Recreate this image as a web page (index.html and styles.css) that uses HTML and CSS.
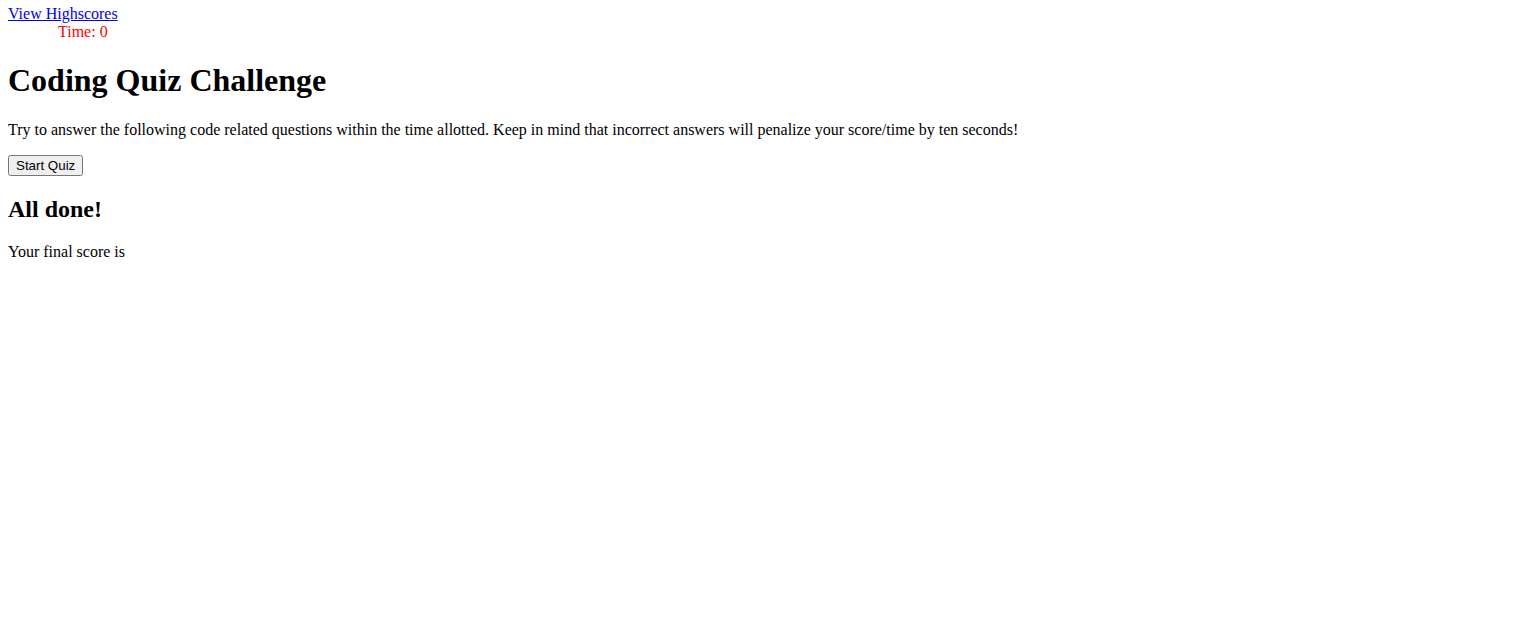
FILE: index.html
```html
<!DOCTYPE html>
<html>
<head>
<meta charset="utf-8">
<title>Coding Quiz</title>
<link rel="stylesheet" href="styles.css">
</head>
<body>
<header class="top">
<a href="#" class="scores-link">View Highscores</a>
<div class="timer">Time: <span class="time-left">0</span></div>
</header>
<main>
<section class="intro">
<h1>Coding Quiz Challenge</h1>
<p>Try to answer the following code related questions within the time allotted. Keep in mind that incorrect answers will penalize your score/time by ten seconds!</p>
<button class="start-btn">Start Quiz</button>
</section>
<section class="done">
<h2>All done!</h2>
<p>Your final score is <span class="final-score"></span></p>
</section>
</main>
</body>
</html>
```
FILE: styles.css
```css
body {
  margin: 5px 8px 8px;
  font-family: "Liberation Serif", "Times New Roman", serif;
  font-size: 16px;
}
.timer {
  color: red;
  padding-left: 50px;
}
.start-btn {
  font-family: "Liberation Sans", Arial, sans-serif;
  font-size: 13.33px;
}
```
